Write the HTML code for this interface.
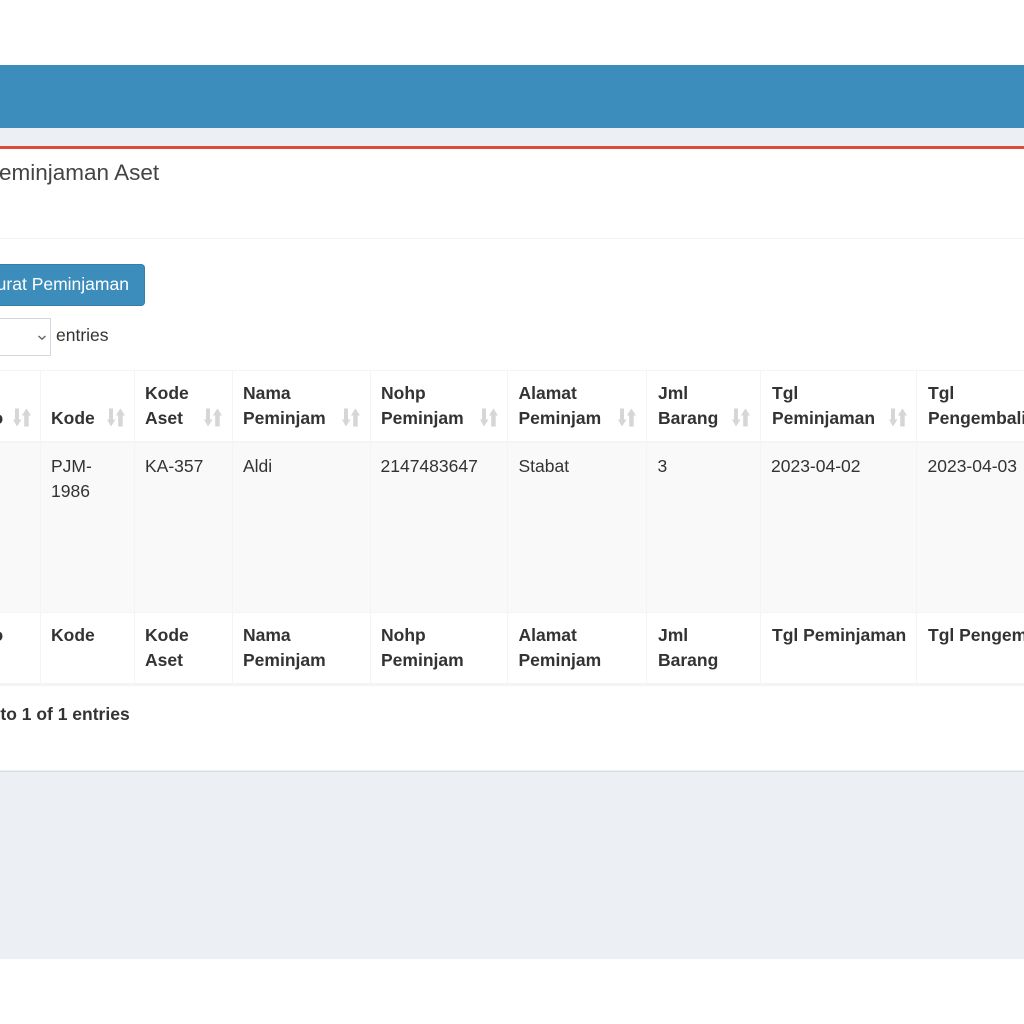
<!DOCTYPE html>
<html>
<head>
<meta charset="utf-8">
<style>
html,body{margin:0;padding:0;width:1024px;height:1024px;overflow:hidden;background:#fff}
body{position:relative;font-family:"Liberation Sans",sans-serif;font-size:17.5px;line-height:25px;color:#333}
.a{position:absolute}
.t{position:absolute;white-space:nowrap}
.b{font-weight:700}
.v{position:absolute;width:1.25px;background:#f4f4f4}
.h{position:absolute;left:0;width:1024px;background:#f4f4f4}
svg{position:absolute}
</style>
</head>
<body>
<div class="a" style="left:0;top:65px;width:1024px;height:63px;background:#3c8dbc"></div>
<div class="a" style="left:0;top:128px;width:1024px;height:831px;background:#ecf0f5"></div>
<div class="a" style="left:0;top:146px;width:1024px;height:621.25px;background:#fff;border-top:3.75px solid #dd4b39;box-sizing:content-box"></div>
<div class="a" style="left:0;top:771px;width:1024px;height:1px;background:#d8dbe0"></div>
<div class="h" style="top:238px;height:1.25px"></div>

<div class="t" style="left:-16px;top:160px;font-size:22.5px;line-height:26px;color:#444">Peminjaman Aset</div>

<div class="a" style="left:-40px;top:264px;width:185px;height:42px;background:#3c8dbc;border:1px solid #367fa9;border-radius:3.75px;box-sizing:border-box"></div>
<div class="t" style="left:-15px;top:272px;color:#fff">Surat Peminjaman</div>

<div class="a" style="left:-40px;top:318px;width:91px;height:38px;background:#fff;border:1px solid #d2d6de;box-sizing:border-box"></div>
<svg style="left:37px;top:334px" width="10" height="7" viewBox="0 0 10 7"><path d="M1.5 2L5 5.2L8.5 2" fill="none" stroke="#666" stroke-width="1.4"/></svg>
<div class="t" style="left:56px;top:323px">entries</div>

<!-- table lines -->
<div class="h" style="top:370px;height:1.25px"></div>
<div class="h" style="top:441px;height:2.5px"></div>
<div class="a" style="left:0;top:443px;width:1024px;height:169px;background:#f9f9f9"></div>
<div class="h" style="top:612px;height:1.25px"></div>
<div class="h" style="top:683px;height:2.5px"></div>

<div class="v" style="left:40px;top:370px;height:315px"></div>
<div class="v" style="left:134px;top:370px;height:315px"></div>
<div class="v" style="left:232px;top:370px;height:315px"></div>
<div class="v" style="left:370px;top:370px;height:315px"></div>
<div class="v" style="left:507px;top:370px;height:315px"></div>
<div class="v" style="left:646px;top:370px;height:315px"></div>
<div class="v" style="left:760px;top:370px;height:315px"></div>
<div class="v" style="left:916px;top:370px;height:315px"></div>

<!-- header -->
<div class="t b" style="left:-7.5px;top:406px">o</div>
<div class="t b" style="left:51px;top:406px">Kode</div>
<div class="t b" style="left:145px;top:381px">Kode<br>Aset</div>
<div class="t b" style="left:243px;top:381px">Nama<br>Peminjam</div>
<div class="t b" style="left:381px;top:381px">Nohp<br>Peminjam</div>
<div class="t b" style="left:518.5px;top:381px">Alamat<br>Peminjam</div>
<div class="t b" style="left:658px;top:381px">Jml<br>Barang</div>
<div class="t b" style="left:772px;top:381px">Tgl<br>Peminjaman</div>
<div class="t b" style="left:928px;top:381px">Tgl<br>Pengembalian</div>

<!-- sort icons -->
<svg width="0" height="0" style="left:0;top:0"><defs><g id="s" fill="#d6d6d6"><path d="M2 0.5H6V11.5H8.5L4 18.5L0 11.5H2Z"/><path d="M11.2 18.5H15.7V7.5H18L13.4 0.5L8.9 7.5H11.2Z"/></g></defs></svg>
<svg style="left:12.5px;top:408px" width="18" height="19" viewBox="0 0 18 19"><use href="#s"/></svg>
<svg style="left:106.5px;top:408px" width="18" height="19" viewBox="0 0 18 19"><use href="#s"/></svg>
<svg style="left:204px;top:408px" width="18" height="19" viewBox="0 0 18 19"><use href="#s"/></svg>
<svg style="left:342px;top:408px" width="18" height="19" viewBox="0 0 18 19"><use href="#s"/></svg>
<svg style="left:480px;top:408px" width="18" height="19" viewBox="0 0 18 19"><use href="#s"/></svg>
<svg style="left:618px;top:408px" width="18" height="19" viewBox="0 0 18 19"><use href="#s"/></svg>
<svg style="left:732px;top:408px" width="18" height="19" viewBox="0 0 18 19"><use href="#s"/></svg>
<svg style="left:889px;top:408px" width="18" height="19" viewBox="0 0 18 19"><use href="#s"/></svg>

<!-- body -->
<div class="t" style="left:51px;top:454px">PJM-<br>1986</div>
<div class="t" style="left:145px;top:454px">KA-357</div>
<div class="t" style="left:243px;top:454px">Aldi</div>
<div class="t" style="left:380.5px;top:454px">2147483647</div>
<div class="t" style="left:518.5px;top:454px">Stabat</div>
<div class="t" style="left:657.5px;top:454px">3</div>
<div class="t" style="left:771px;top:454px">2023-04-02</div>
<div class="t" style="left:927.5px;top:454px">2023-04-03</div>

<!-- footer -->
<div class="t b" style="left:-7.5px;top:623px">o</div>
<div class="t b" style="left:51px;top:623px">Kode</div>
<div class="t b" style="left:145px;top:623px">Kode<br>Aset</div>
<div class="t b" style="left:243px;top:623px">Nama<br>Peminjam</div>
<div class="t b" style="left:381px;top:623px">Nohp<br>Peminjam</div>
<div class="t b" style="left:518.5px;top:623px">Alamat<br>Peminjam</div>
<div class="t b" style="left:658px;top:623px">Jml<br>Barang</div>
<div class="t b" style="left:772px;top:623px">Tgl Peminjaman</div>
<div class="t b" style="left:928px;top:623px">Tgl Pengembalian</div>

<div class="t b" style="left:-92px;top:702px">Showing 1 to 1 of 1 entries</div>
</body>
</html>
